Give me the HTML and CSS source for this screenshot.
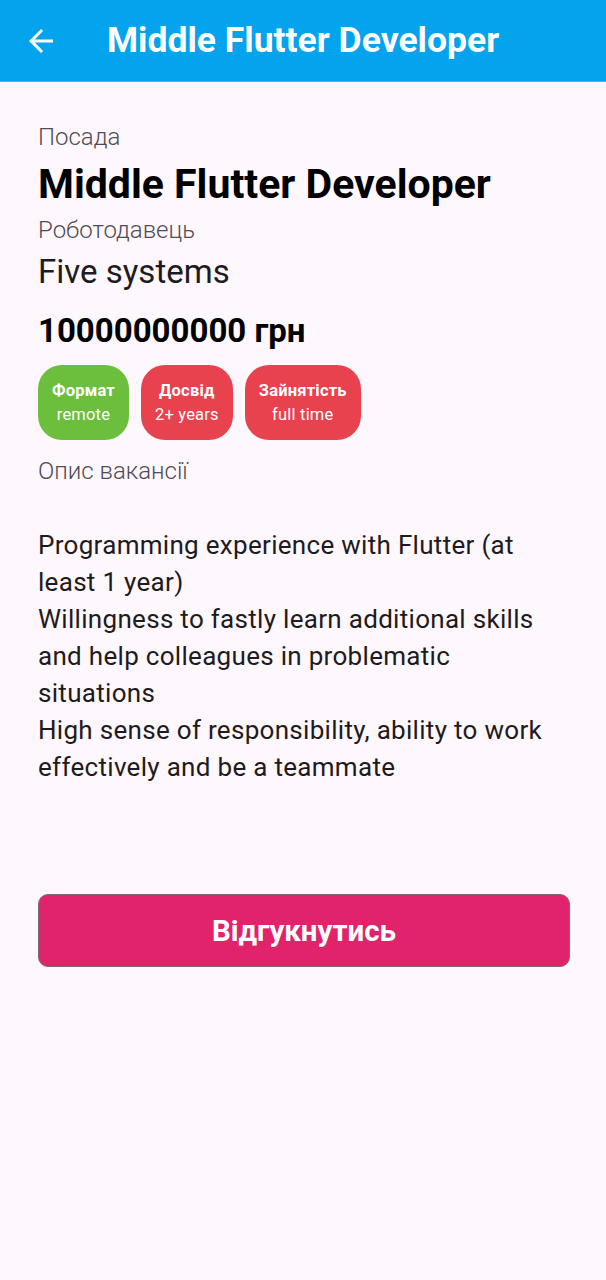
FILE: index.html
```html
<!DOCTYPE html>
<html lang="uk">
<head>
<meta charset="utf-8">
<title>Middle Flutter Developer</title>
<link rel="stylesheet" href="styles.css">
</head>
<body>
<header class="appbar">
  <button class="back" aria-label="Назад">
    <svg width="36" height="36" viewBox="0 0 24 24"><path d="M20 11H7.83l5.59-5.59L12 4l-8 8 8 8 1.41-1.41L7.83 13H20v-2z" fill="#fff"/></svg>
  </button>
  <h1 class="appbar-title">Middle Flutter Developer</h1>
</header>
<main class="content">
  <div class="label">Посада</div>
  <div class="job-title">Middle Flutter Developer</div>
  <div class="label label-gap">Роботодавець</div>
  <div class="company">Five systems</div>
  <div class="salary">10000000000 грн</div>
  <div class="chips">
    <div class="chip chip-green"><span class="chip-head">Формат</span><span class="chip-val">remote</span></div>
    <div class="chip chip-red"><span class="chip-head">Досвід</span><span class="chip-val">2+ years</span></div>
    <div class="chip chip-red"><span class="chip-head">Зайнятість</span><span class="chip-val">full time</span></div>
  </div>
  <div class="label">Опис вакансії</div>
  <p class="desc">Programming experience with Flutter (at least 1 year)<br>Willingness to fastly learn additional skills and help colleagues in problematic situations<br>High sense of responsibility, ability to work effectively and be a teammate</p>
  <button class="apply">Відгукнутись</button>
</main>
</body>
</html>
```
FILE: styles.css
```css
* { box-sizing: border-box; }
html, body { margin: 0; padding: 0; }
body {
  background: #fef7fd;
  font-family: Roboto, "Noto Sans", sans-serif;
  color: #1d1b20;
  width: 606px;
  min-height: 1280px;
}
.appbar {
  height: 82px;
  background: #03a3ee;
  display: flex;
  align-items: center;
  border-bottom: 1px solid #3fb6f0;
}
.back {
  background: none;
  border: 0;
  padding: 0;
  margin-left: 23px;
  width: 36px;
  height: 36px;
  display: flex;
}
.appbar-title {
  margin: 0 0 0 48px;
  color: #fff;
  font-size: 35.5px;
  font-weight: 700;
  line-height: 1;
}
.content {
  padding: 40px 37px 0 38px;
  display: flex;
  flex-direction: column;
  align-items: flex-start;
}
.label {
  font-size: 24px;
  font-weight: 300;
  color: #4f4b54;
  line-height: 30px;
}
.label-gap { margin-top: 7px; }
.job-title {
  font-size: 41px;
  font-weight: 700;
  color: #000;
  line-height: 48px;
  margin-top: 8px;
}
.company {
  font-size: 33px;
  font-weight: 400;
  line-height: 40px;
  margin-top: 7px;
}
.salary {
  font-size: 33px;
  font-weight: 700;
  color: #000;
  line-height: 40px;
  margin-top: 19px;
}
.chips {
  display: flex;
  gap: 12px;
  margin-top: 14px;
  margin-bottom: 16px;
}
.chip {
  height: 75px;
  border-radius: 24px;
  padding: 0 14px;
  display: flex;
  flex-direction: column;
  justify-content: center;
  align-items: center;
  color: #fff;
  gap: 4px;
  letter-spacing: 0.2px;
}
.chip-green { background: #6cbf3d; }
.chip-red { background: #e8424f; }
.chip-head { font-size: 16.5px; font-weight: 700; line-height: 20px; }
.chip-val { font-size: 16.5px; font-weight: 400; line-height: 20px; }
.desc {
  margin: 41px 0 0;
  font-size: 26px;
  line-height: 37px;
  letter-spacing: 0.3px;
  color: #1d1b20;
}
.apply {
  margin-top: 108px;
  width: 532px;
  height: 73px;
  background: #e0236a;
  border: 1.5px solid #7c6a76;
  border-radius: 10px;
  color: #fff;
  font-family: Roboto, sans-serif;
  font-size: 29.5px;
  font-weight: 700;
}
```
